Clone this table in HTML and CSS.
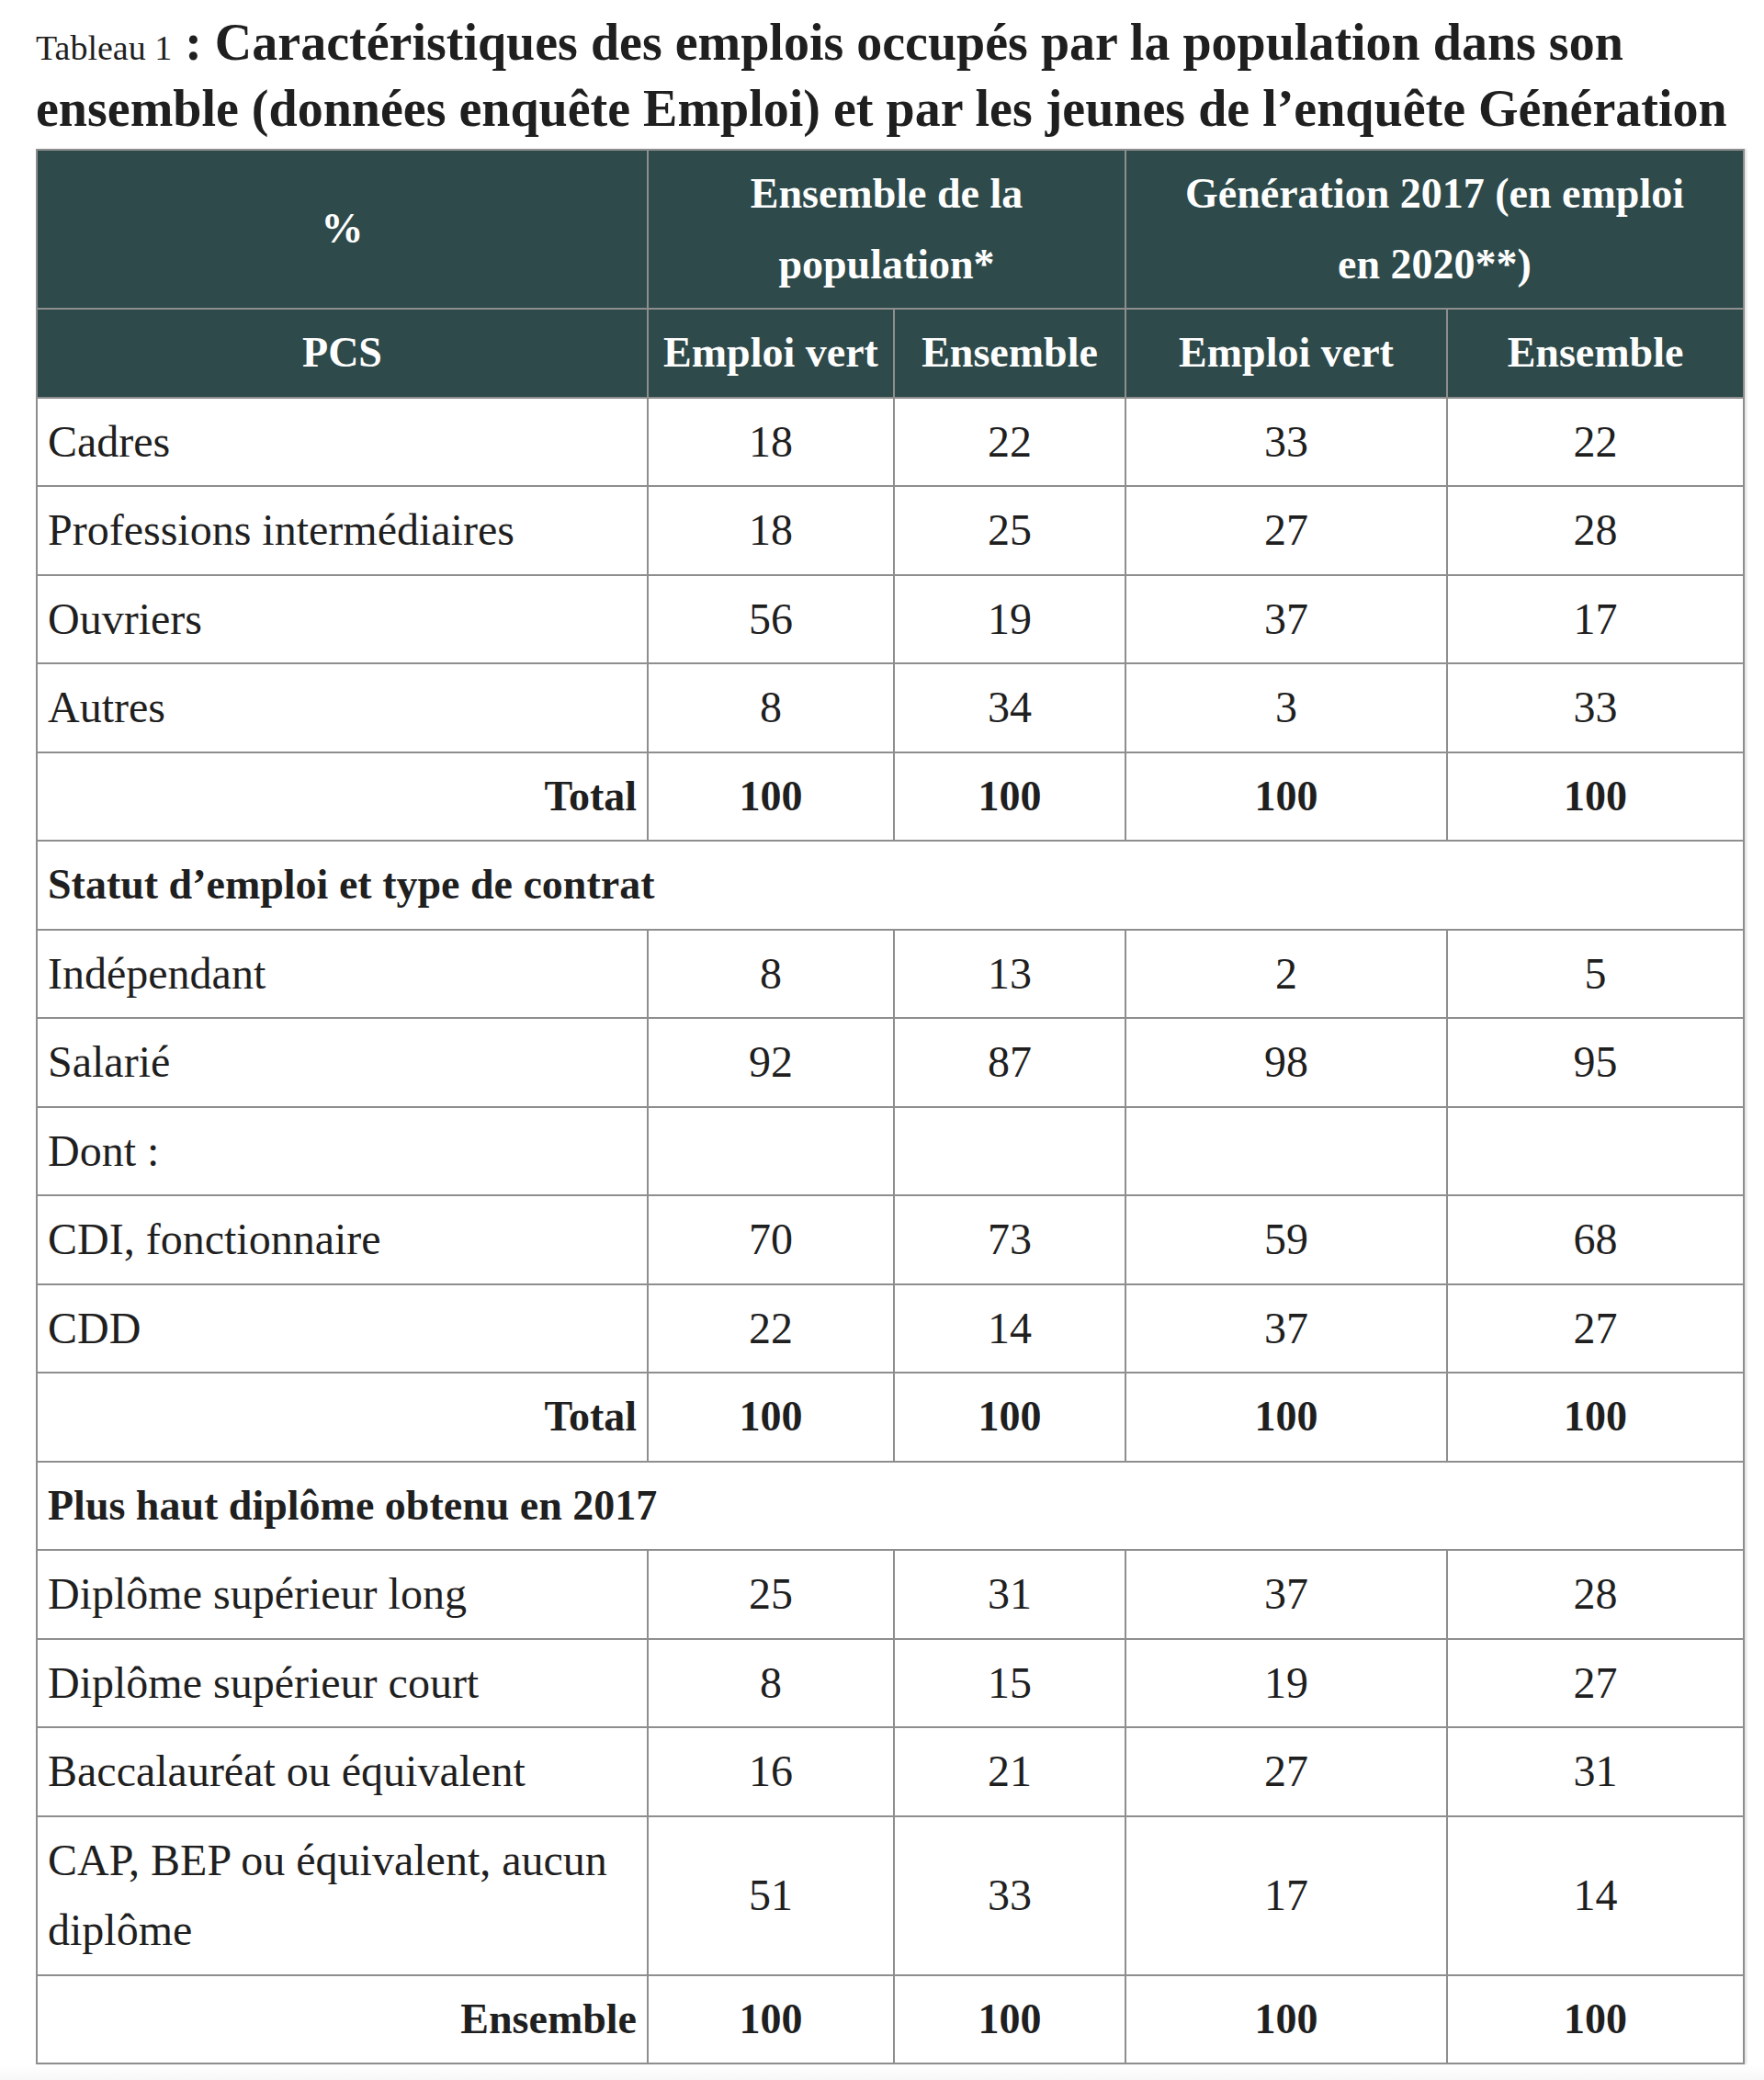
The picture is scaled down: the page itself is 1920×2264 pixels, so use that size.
FILE: index.html
```html
<!DOCTYPE html>
<html lang="fr">
<head>
<meta charset="utf-8">
<title>Tableau 1</title>
<link rel="stylesheet" href="styles.css">
</head>
<body>
<div class="page">
  <h1 class="title"><span class="label">Tableau 1</span> : Caractéristiques des emplois occupés par la population dans son ensemble (données enquête Emploi) et par les jeunes de l’enquête Génération</h1>
  <table class="data">
    <colgroup>
      <col class="c1"><col class="c2"><col class="c3"><col class="c4"><col class="c5">
    </colgroup>
    <thead>
      <tr>
        <th>%</th>
        <th colspan="2">Ensemble de la population*</th>
        <th colspan="2">Génération 2017 (en emploi<br>en 2020**)</th>
      </tr>
      <tr>
        <th>PCS</th>
        <th>Emploi vert</th>
        <th>Ensemble</th>
        <th>Emploi vert</th>
        <th>Ensemble</th>
      </tr>
    </thead>
    <tbody>
      <tr><td class="lbl">Cadres</td><td>18</td><td>22</td><td>33</td><td>22</td></tr>
      <tr><td class="lbl">Professions intermédiaires</td><td>18</td><td>25</td><td>27</td><td>28</td></tr>
      <tr><td class="lbl">Ouvriers</td><td>56</td><td>19</td><td>37</td><td>17</td></tr>
      <tr><td class="lbl">Autres</td><td>8</td><td>34</td><td>3</td><td>33</td></tr>
      <tr class="total"><td class="lbl">Total</td><td>100</td><td>100</td><td>100</td><td>100</td></tr>
      <tr class="section"><td colspan="5">Statut d’emploi et type de contrat</td></tr>
      <tr><td class="lbl">Indépendant</td><td>8</td><td>13</td><td>2</td><td>5</td></tr>
      <tr><td class="lbl">Salarié</td><td>92</td><td>87</td><td>98</td><td>95</td></tr>
      <tr><td class="lbl">Dont :</td><td></td><td></td><td></td><td></td></tr>
      <tr><td class="lbl">CDI, fonctionnaire</td><td>70</td><td>73</td><td>59</td><td>68</td></tr>
      <tr><td class="lbl">CDD</td><td>22</td><td>14</td><td>37</td><td>27</td></tr>
      <tr class="total"><td class="lbl">Total</td><td>100</td><td>100</td><td>100</td><td>100</td></tr>
      <tr class="section"><td colspan="5">Plus haut diplôme obtenu en 2017</td></tr>
      <tr><td class="lbl">Diplôme supérieur long</td><td>25</td><td>31</td><td>37</td><td>28</td></tr>
      <tr><td class="lbl">Diplôme supérieur court</td><td>8</td><td>15</td><td>19</td><td>27</td></tr>
      <tr><td class="lbl">Baccalauréat ou équivalent</td><td>16</td><td>21</td><td>27</td><td>31</td></tr>
      <tr><td class="lbl">CAP, BEP ou équivalent, aucun diplôme</td><td>51</td><td>33</td><td>17</td><td>14</td></tr>
      <tr class="total"><td class="lbl">Ensemble</td><td>100</td><td>100</td><td>100</td><td>100</td></tr>
    </tbody>
  </table>
</div>
<div class="edge"></div>
</body>
</html>
```
FILE: styles.css
```css
html, body {
  margin: 0;
  padding: 0;
  background: #ffffff;
}

body {
  font-family: "Liberation Serif", "Times New Roman", serif;
  color: #1f1f1f;
}

.page {
  padding: 10px 23px 0 39px;
}

.title {
  margin: 0 0 8px 0;
  font-size: 56px;
  line-height: 72px;
  font-weight: 700;
  color: #1f1f1f;
}

.title .label {
  font-size: 38px;
  line-height: 1;
  font-weight: 400;
}

.data {
  width: 1858px;
  table-layout: fixed;
  border-collapse: collapse;
  box-shadow: 2px 0 2px rgba(0, 0, 0, 0.12);
}

.c1 { width: 665px; }
.c2 { width: 268px; }
.c3 { width: 252px; }
.c4 { width: 350px; }
.c5 { width: 323px; }

.data th,
.data td {
  border: 2px solid #8e8e8e;
  padding: 9px 11px;
  line-height: 76.5px;
  vertical-align: middle;
  text-align: center;
}

.data th {
  background: #2e4a4a;
  color: #ffffff;
  font-size: 46px;
  font-weight: 700;
}

.data td {
  font-size: 48px;
  font-weight: 400;
  color: #1f1f1f;
}

.data td.lbl {
  text-align: left;
}

.data tr.total td {
  font-size: 46px;
  font-weight: 700;
}

.data tr.total td.lbl {
  text-align: right;
}

.data tr.section td {
  font-size: 46px;
  font-weight: 700;
  text-align: left;
}

.edge {
  height: 18px;
  margin-top: 1px;
  background: linear-gradient(#ffffff, #f6f6f6);
  border-bottom: 2px solid #2a2a2a;
}
```
